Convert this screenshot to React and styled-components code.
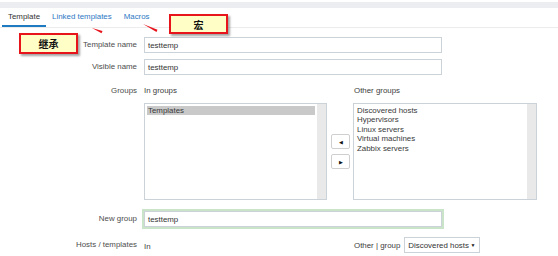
import React from "react";
import styled, { createGlobalStyle } from "styled-components";

const Global = createGlobalStyle`
  body {
    margin: 0;
    background: #fff;
    font-family: "Liberation Sans", Arial, sans-serif;
    font-size: 7.9px;
    color: #333;
  }
`;

const Page = styled.div`
  position: relative;
  width: 558px;
  height: 256px;
  overflow: hidden;
  background: #fff;
`;

const TopBand = styled.div`
  height: 6px;
  margin-top: 2px;
  background: #ebedf0;
`;

const TabBar = styled.div`
  display: flex;
  height: 19px;
  padding-left: 2px;
  border-bottom: 1px solid #ececec;
`;

const Tab = styled.div`
  display: flex;
  align-items: center;
  box-sizing: border-box;
  height: 19px;
  padding: 0 6px;
  border-bottom: 2px solid ${(p) => (p.$active ? "#1f7bc1" : "transparent")};
  color: ${(p) => (p.$active ? "#333" : "#2d78c4")};
`;

const Form = styled.div`
  padding-top: 9px;
`;

const Row = styled.div`
  display: flex;
  align-items: ${(p) => (p.$top ? "flex-start" : "center")};
  margin-top: ${(p) => p.$gap || 0}px;
`;

const Label = styled.div`
  width: 137px;
  margin-right: 7px;
  text-align: right;
  line-height: 10px;
  color: #4d4d4d;
`;

const Input = styled.div`
  box-sizing: border-box;
  width: 298px;
  height: 16px;
  padding-left: 3px;
  display: flex;
  align-items: center;
  border: 1px solid #cbd2d8;
  color: #333;
  box-shadow: ${(p) => (p.$focus ? "0 0 0 2px #c9e4c9" : "none")};
`;

const Pair = styled.div`
  display: grid;
  grid-template-columns: 183px 26px 184px;
  align-items: center;
`;

const Head = styled.div`
  line-height: 10px;
  color: #3d3d3d;
  padding-left: ${(p) => p.$pad || 0}px;
  margin-top: ${(p) => p.$shift || 0}px;
`;

const ListBox = styled.div`
  position: relative;
  box-sizing: border-box;
  height: 97px;
  margin-top: 7px;
  padding: 2px 11px 2px 2px;
  border: 1px solid #cbd2d8;
`;

const Scroll = styled.div`
  position: absolute;
  top: 0;
  right: 0;
  bottom: 0;
  width: 9px;
  background: #e9e9e9;
`;

const Item = styled.div`
  height: 9.4px;
  line-height: 9.4px;
  padding-left: 1px;
  color: #3a3a3a;
  background: ${(p) => (p.$selected ? "#c9c9c9" : "transparent")};
`;

const Mover = styled.div`
  display: flex;
  flex-direction: column;
  gap: 5px;
  align-self: end;
  height: 97px;
  justify-content: center;
  padding-left: 4px;
`;

const MoveButton = styled.div`
  box-sizing: border-box;
  width: 19px;
  height: 15px;
  display: flex;
  align-items: center;
  justify-content: center;
  border: 1px solid #cfcfcf;
  border-radius: 2px;
  background: #fff;
  font-size: 5px;
  color: #111;
`;

const OtherGroup = styled.div`
  display: flex;
  align-items: center;
  gap: 4px;
  padding-left: 1px;
  color: #3d3d3d;
`;

const Select = styled.div`
  box-sizing: border-box;
  width: 76px;
  height: 16px;
  display: flex;
  align-items: center;
  justify-content: space-between;
  padding: 0 4px 0 3px;
  border: 1px solid #cbd2d8;
  color: #333;
`;

const Caret = styled.span`
  font-size: 5px;
  color: #111;
`;

const Callout = styled.div`
  position: absolute;
  left: ${(p) => p.$x}px;
  top: ${(p) => p.$y}px;
  width: ${(p) => p.$w}px;
  height: ${(p) => p.$h}px;
  box-sizing: border-box;
  display: flex;
  align-items: center;
  justify-content: center;
  border: 2px solid #e8141c;
  background: #fffec6;
  box-shadow: 2px 2px 2px rgba(90, 90, 90, 0.55);
  font-family: "Noto Sans CJK SC", sans-serif;
  font-weight: 700;
  font-size: 10px;
  color: #111;
`;

const Marks = styled.svg`
  position: absolute;
  left: 0;
  top: 0;
  pointer-events: none;
`;

const otherGroups = [
  "Discovered hosts",
  "Hypervisors",
  "Linux servers",
  "Virtual machines",
  "Zabbix servers",
];

export default function App() {
  return (
    <Page>
      <Global />
      <TopBand />
      <TabBar>
        <Tab $active>Template</Tab>
        <Tab>Linked templates</Tab>
        <Tab>Macros</Tab>
      </TabBar>
      <Form>
        <Row>
          <Label>Template name</Label>
          <Input>testtemp</Input>
        </Row>
        <Row $gap={6}>
          <Label>Visible name</Label>
          <Input>testtemp</Input>
        </Row>
        <Row $gap={11} $top>
          <Label>Groups</Label>
          <Pair>
            <Head>In groups</Head>
            <div />
            <Head $pad={1}>Other groups</Head>
            <ListBox>
              <Item $selected>Templates</Item>
              <Scroll />
            </ListBox>
            <Mover>
              <MoveButton>◀</MoveButton>
              <MoveButton>▶</MoveButton>
            </Mover>
            <ListBox>
              {otherGroups.map((g) => (
                <Item key={g}>{g}</Item>
              ))}
              <Scroll />
            </ListBox>
          </Pair>
        </Row>
        <Row $gap={11}>
          <Label>New group</Label>
          <Input $focus>testtemp</Input>
        </Row>
        <Row $gap={10}>
          <Label>Hosts / templates</Label>
          <Pair>
            <Head $shift={3}>In</Head>
            <div />
            <OtherGroup>
              Other | group
              <Select>
                Discovered hosts
                <Caret>▼</Caret>
              </Select>
            </OtherGroup>
          </Pair>
        </Row>
      </Form>

      <Callout $x={19} $y={33} $w={59} $h={21}>继承</Callout>
      <Callout $x={169} $y={14} $w={59} $h={20}>宏</Callout>
      <Marks width="558" height="256">
        <polygon points="92,28 102.5,31 101.5,33.2" fill="#e8141c" />
        <polygon points="143,24 157.5,29.8 156.5,32" fill="#e8141c" />
      </Marks>
    </Page>
  );
}
